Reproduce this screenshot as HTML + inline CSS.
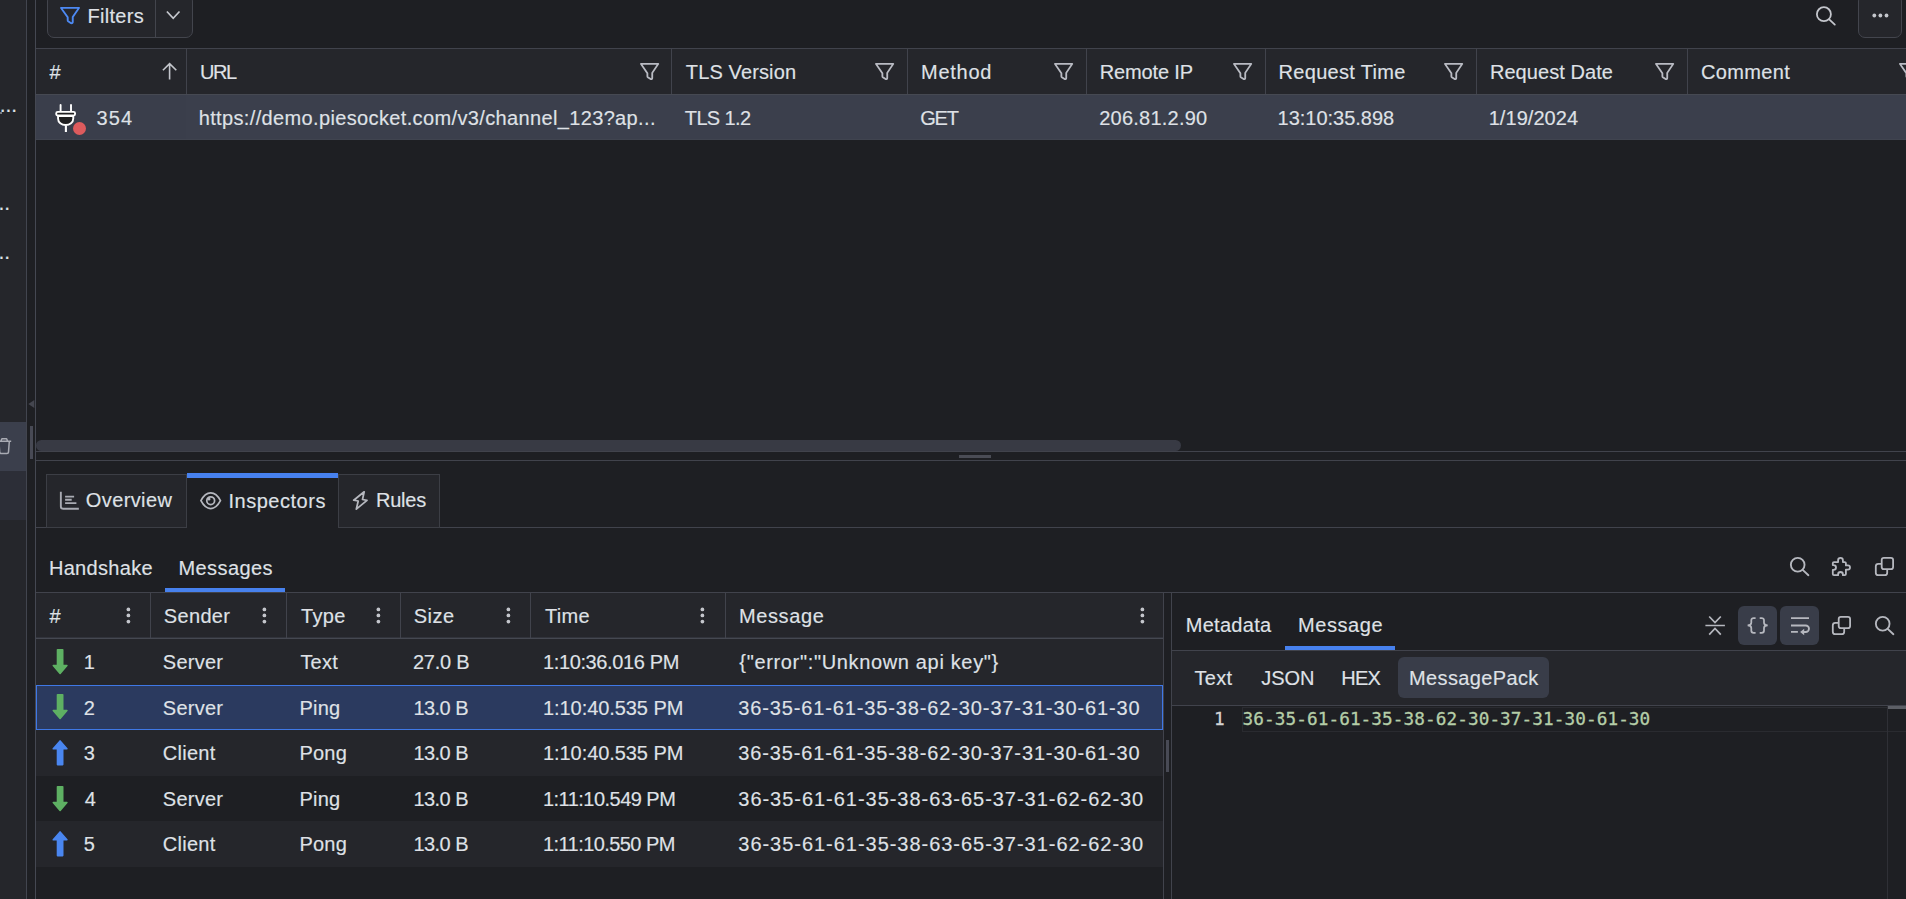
<!DOCTYPE html>
<html lang="en"><head><meta charset="utf-8"><title>Fiddler Everywhere - WebSocket Messages</title>
<style>
html,body{margin:0;padding:0}
body{width:1906px;height:899px;overflow:hidden;background:#1e1f23;position:relative;font-family:"Liberation Sans",sans-serif;color:#dfe1e6}
.a{position:absolute}
.t{position:absolute;white-space:pre;line-height:30px;font-size:20px;color:#dfe1e6}
.t.s{font-family:"Liberation Sans",sans-serif;-webkit-text-stroke-width:0.15px}
.t.m{font-family:"DejaVu Sans Mono","Liberation Mono",monospace;font-size:17.7px;-webkit-text-stroke-width:0.3px}
.ln{position:absolute;background:#41434c}
.pn{position:absolute;background:#25262b}
svg{position:absolute;overflow:visible}

</style></head>
<body>
<!-- left sidebar -->
<div class="pn" style="left:0;top:0;width:26px;height:899px"></div>
<div class="a" style="left:0;top:422px;width:26px;height:49px;background:#3b3f4c"></div>
<div class="a" style="left:0;top:471px;width:26px;height:49px;background:#2c2e37"></div>
<div class="a" style="left:26px;top:0;width:1px;height:899px;background:#42454f"></div>
<div class="a" style="left:35px;top:0;width:1px;height:899px;background:#454852"></div>
<span class="t s" style="left:-0.3px;top:90px;font-size:21px">...</span>
<span class="t s" style="left:-7.4px;top:188px;font-size:21px">...</span>
<span class="t s" style="left:-7.4px;top:237px;font-size:21px">...</span>
<div class="a" style="left:0;top:112px;width:2px;height:2px;background:#9a9ca3;border-radius:1px"></div>
<!-- trash icon -->
<svg style="left:-4px;top:437px" width="16" height="18" viewBox="0 0 16 18" fill="none" stroke="#a9abb3" stroke-width="1.5" stroke-linejoin="round"><path d="M0 4.300h15.200M4.800 4.300L5.900 1.700h4.700l1.100 2.600M13.300 4.500l-0.800 10.600a1.500 1.500 0 0 1-1.500 1.400H5.200a1.500 1.500 0 0 1-1.500-1.400L2.900 4.500"/></svg>
<!-- splitter triangle + grip -->
<svg style="left:28px;top:400px" width="7" height="8" viewBox="0 0 7 8"><path d="M6.300 0v8L0.300 4z" fill="#44464f"/></svg>
<div class="a" style="left:30px;top:426px;width:3px;height:33px;background:#484a55"></div>



<!-- top toolbar -->
<div class="a" style="left:47px;top:-6px;width:144px;height:42px;border:1px solid #43454d;border-radius:7px;background:#25262b"></div>
<div class="a" style="left:155px;top:0;width:1px;height:37px;background:#43454d"></div>
<svg style="left:60px;top:6.700px" width="20" height="17.300" viewBox="0.750 0.750 17.800 16.650" preserveAspectRatio="none" stroke="#4d89f3"><path d="M1.600 1.600H17.700L12.100 10.300V15.200Q12.100 16.700 10.600 16.300L8 14.500Q7.600 14.200 7.600 13.600V10.700Z" fill="none" stroke-width="1.700" stroke-linejoin="round"/></svg>
<svg style="left:166px;top:10px" width="15" height="10" viewBox="0 0 15 10" fill="none" stroke="#c6c8ce" stroke-width="1.700"><path d="M0.900 1.500l6.300 6.800 6.300-6.800"/></svg>
<!-- search -->
<svg style="left:1814.800px;top:4.500px" width="21" height="21" viewBox="0 0 21 21" fill="none" stroke="#c4c6cc" stroke-width="1.800" stroke-linecap="round"><circle cx="8.900" cy="9.200" r="7"/><path d="M14.200 14.400l5.600 5.200"/></svg>
<!-- more button -->
<div class="a" style="left:1858px;top:-6px;width:42px;height:42px;border:1px solid #43454d;border-radius:7px;background:#25262b"></div>
<svg style="left:1872px;top:13px" width="17" height="5" viewBox="0 0 17 5" fill="#c4c6cc"><circle cx="2.300" cy="2.500" r="1.900"/><circle cx="8.400" cy="2.500" r="1.900"/><circle cx="14.500" cy="2.500" r="1.900"/></svg>

<!-- sessions grid header -->
<div class="pn" style="left:36px;top:48px;width:1870px;height:47px"></div>
<div class="ln" style="left:36px;top:48px;width:1870px;height:1px"></div>
<div class="a" style="left:36px;top:94px;width:1870px;height:1px;background:#464952"></div>
<div class="ln" style="left:186px;top:49px;width:1px;height:45px"></div>
<div class="ln" style="left:671px;top:49px;width:1px;height:45px"></div>
<div class="ln" style="left:907px;top:49px;width:1px;height:45px"></div>
<div class="ln" style="left:1086px;top:49px;width:1px;height:45px"></div>
<div class="ln" style="left:1265px;top:49px;width:1px;height:45px"></div>
<div class="ln" style="left:1476px;top:49px;width:1px;height:45px"></div>
<div class="ln" style="left:1687px;top:49px;width:1px;height:45px"></div>
<!-- selected session row -->
<div class="a" style="left:36px;top:95px;width:1870px;height:45px;background:#3b3f4c"></div>
<div class="a" style="left:36px;top:139px;width:1870px;height:1px;background:#40444f"></div>
<div class="a" style="left:36px;top:95px;width:150px;height:44px;background:#3a3e4b"></div>
<!-- sort arrow -->
<svg style="left:162px;top:62px" width="16" height="18" viewBox="0 0 16 18" fill="none" stroke="#c4c6cc" stroke-width="1.600"><path d="M7.600 17.600V1.600M0.900 8.300l6.700-6.700 6.700 6.700"/></svg>
<!-- header filter icons -->
<svg style="left:640px;top:63px" width="19.200" height="17.200" viewBox="0.750 0.750 17.800 16.650" preserveAspectRatio="none" stroke="#b9bbc3"><path d="M1.600 1.600H17.700L12.100 10.300V15.200Q12.100 16.700 10.600 16.300L8 14.500Q7.600 14.200 7.600 13.600V10.700Z" fill="none" stroke-width="1.700" stroke-linejoin="round"/></svg>
<svg style="left:875px;top:63px" width="19.200" height="17.200" viewBox="0.750 0.750 17.800 16.650" preserveAspectRatio="none" stroke="#b9bbc3"><path d="M1.600 1.600H17.700L12.100 10.300V15.200Q12.100 16.700 10.600 16.300L8 14.500Q7.600 14.200 7.600 13.600V10.700Z" fill="none" stroke-width="1.700" stroke-linejoin="round"/></svg>
<svg style="left:1054.200px;top:63px" width="19.200" height="17.200" viewBox="0.750 0.750 17.800 16.650" preserveAspectRatio="none" stroke="#b9bbc3"><path d="M1.600 1.600H17.700L12.100 10.300V15.200Q12.100 16.700 10.600 16.300L8 14.500Q7.600 14.200 7.600 13.600V10.700Z" fill="none" stroke-width="1.700" stroke-linejoin="round"/></svg>
<svg style="left:1233.200px;top:63px" width="19.200" height="17.200" viewBox="0.750 0.750 17.800 16.650" preserveAspectRatio="none" stroke="#b9bbc3"><path d="M1.600 1.600H17.700L12.100 10.300V15.200Q12.100 16.700 10.600 16.300L8 14.500Q7.600 14.200 7.600 13.600V10.700Z" fill="none" stroke-width="1.700" stroke-linejoin="round"/></svg>
<svg style="left:1444.200px;top:63px" width="19.200" height="17.200" viewBox="0.750 0.750 17.800 16.650" preserveAspectRatio="none" stroke="#b9bbc3"><path d="M1.600 1.600H17.700L12.100 10.300V15.200Q12.100 16.700 10.600 16.300L8 14.500Q7.600 14.200 7.600 13.600V10.700Z" fill="none" stroke-width="1.700" stroke-linejoin="round"/></svg>
<svg style="left:1655.200px;top:63px" width="19.200" height="17.200" viewBox="0.750 0.750 17.800 16.650" preserveAspectRatio="none" stroke="#b9bbc3"><path d="M1.600 1.600H17.700L12.100 10.300V15.200Q12.100 16.700 10.600 16.300L8 14.500Q7.600 14.200 7.600 13.600V10.700Z" fill="none" stroke-width="1.700" stroke-linejoin="round"/></svg>
<svg style="left:1898.800px;top:63px" width="19.200" height="17.200" viewBox="0.750 0.750 17.800 16.650" preserveAspectRatio="none" stroke="#b9bbc3"><path d="M1.600 1.600H17.700L12.100 10.300V15.200Q12.100 16.700 10.600 16.300L8 14.500Q7.600 14.200 7.600 13.600V10.700Z" fill="none" stroke-width="1.700" stroke-linejoin="round"/></svg>
<!-- plug icon -->
<svg style="left:55px;top:104px" width="22" height="28" viewBox="0 0 22 28" fill="none" stroke="#fff" stroke-width="1.900"><path d="M5.600 0.900v7M16 0.900v7" stroke-linecap="round"/><path d="M3.050 12v2.500C3.050 18.500 6.500 21 10.650 21S18.250 18.500 18.250 14.500V12z" fill="#202021"/><rect x="1.250" y="7.850" width="18.800" height="3.700" rx="1.500" fill="#202021"/><path d="M10.900 21.500V28" stroke-width="2.100"/></svg>
<div class="a" style="left:72.900px;top:121.800px;width:13.300px;height:13.300px;border-radius:50%;background:#dd5b5d"></div>

<!-- horizontal scrollbar -->
<div class="a" style="left:36px;top:440px;width:1145px;height:11px;border-radius:6px;background:#383a44"></div>
<div class="ln" style="left:36px;top:451px;width:1870px;height:1px"></div>
<div class="a" style="left:959px;top:455px;width:32px;height:3px;background:#4a4c55"></div>
<div class="ln" style="left:36px;top:460px;width:1870px;height:1px"></div>
<!-- main tabs -->
<div class="ln" style="left:36px;top:527px;width:1870px;height:1px"></div>
<div class="a" style="left:46px;top:474px;width:139px;height:52px;border:1px solid #3c3e45;background:#25262b"></div>
<div class="a" style="left:338px;top:474px;width:100px;height:52px;border:1px solid #3c3e45;background:#25262b"></div>
<div class="a" style="left:187px;top:473px;width:151px;height:56px;background:#1e1f23"></div>
<div class="a" style="left:187px;top:473px;width:151px;height:5px;background:#4781ee"></div>
<!-- overview icon -->
<svg style="left:59px;top:491px" width="21" height="19" viewBox="0 0 21 19" fill="none" stroke="#a9abb3" stroke-width="1.900"><path d="M1.850 0.800v14.700a2.300 2.300 0 0 0 2.300 2.300h15.700"/><path d="M6.100 5.550h9M6.100 8.750h6.600M6.100 12.150h11.300" stroke-width="1.800"/></svg>
<!-- eye icon -->
<svg style="left:199.800px;top:491.700px" width="21.400" height="17.500" viewBox="0 0 21.400 17.500" fill="none" stroke="#b6b8bf" stroke-width="1.750"><path d="M0.950 8.700C3.700 3.400 6.700 0.950 10.700 0.950S17.700 3.400 20.450 8.700C17.700 14 14.700 16.550 10.700 16.550S3.700 14 0.950 8.700z"/><circle cx="10.700" cy="8.700" r="3.900"/><circle cx="9" cy="7" r="1.500" fill="#b6b8bf" stroke="none"/></svg>
<!-- bolt icon -->
<svg style="left:352px;top:490px" width="17" height="21" viewBox="0 0 17 21" fill="none" stroke="#b6b8bf" stroke-width="1.750" stroke-linejoin="round"><path d="M12.200 1.800L1.700 10.200l4.500 0.800-1.900 8.200L15 10.300l-4.500-0.800z"/></svg>

<!-- sub tabs -->
<div class="ln" style="left:36px;top:592px;width:1870px;height:1px"></div>
<div class="a" style="left:165px;top:588px;width:120px;height:4px;background:#4781ee"></div>
<svg style="left:1789px;top:556px" width="21" height="21" viewBox="0 0 21 21"><g fill="none" stroke="#b6b8bf" stroke-width="1.850" stroke-linecap="round"><circle cx="8.700" cy="8.700" r="6.850"/><path d="M13.700 13.900l5.700 5.300"/></g></svg>
<svg style="left:1874px;top:556px" width="21" height="21" viewBox="0 0 21 21"><g fill="none" stroke="#b6b8bf" stroke-width="1.800"><rect x="7.700" y="1.800" width="11.400" height="11.400" rx="2.200"/><path d="M7.700 7.800H4.300a2.500 2.500 0 0 0-2.500 2.500v6.400a2.500 2.500 0 0 0 2.500 2.500h6.400a2.500 2.500 0 0 0 2.500-2.500V13.200"/></g></svg>
<!-- puzzle -->
<svg style="left:1831px;top:556px" width="21" height="21" viewBox="0 0 21 21" fill="none" stroke="#b6b8bf" stroke-width="1.800" stroke-linejoin="round"><path d="M3 6.100H7.100V4.200A2.400 2.400 0 0 1 11.900 4.200V6.100H13.700a1.200 1.200 0 0 1 1.200 1.200V9.400H16.900A2.100 2.100 0 0 1 16.900 13.600H14.900V18a1.200 1.200 0 0 1-1.200 1.200H11.900V18.400A2.400 2.400 0 0 0 7.100 18.400V19.200H3a1.200 1.200 0 0 1-1.200-1.200V13.900H2.600A2.400 2.400 0 0 0 2.600 9.100H1.800V7.300a1.200 1.200 0 0 1 1.200-1.200Z"/></svg>

<!-- messages grid -->
<div class="pn" style="left:36px;top:593px;width:1127px;height:45px"></div>
<div class="a" style="left:36px;top:637px;width:1127px;height:1px;background:#31333b"></div>
<div class="a" style="left:36px;top:638px;width:1127px;height:1px;background:#454851"></div>
<div class="ln" style="left:150px;top:593px;width:1px;height:45px"></div>
<div class="ln" style="left:286px;top:593px;width:1px;height:45px"></div>
<div class="ln" style="left:400px;top:593px;width:1px;height:45px"></div>
<div class="ln" style="left:530px;top:593px;width:1px;height:45px"></div>
<div class="ln" style="left:725px;top:593px;width:1px;height:45px"></div>
<svg style="left:125.700px;top:607.200px" width="5" height="17" viewBox="0 0 5 17" fill="#c4c6cc"><g><circle cx="2.400" cy="2.400" r="1.850"/><circle cx="2.400" cy="8.450" r="1.850"/><circle cx="2.400" cy="14.600" r="1.850"/></g></svg>
<svg style="left:261.600px;top:607.200px" width="5" height="17" viewBox="0 0 5 17" fill="#c4c6cc"><g><circle cx="2.400" cy="2.400" r="1.850"/><circle cx="2.400" cy="8.450" r="1.850"/><circle cx="2.400" cy="14.600" r="1.850"/></g></svg>
<svg style="left:375.500px;top:607.200px" width="5" height="17" viewBox="0 0 5 17" fill="#c4c6cc"><g><circle cx="2.400" cy="2.400" r="1.850"/><circle cx="2.400" cy="8.450" r="1.850"/><circle cx="2.400" cy="14.600" r="1.850"/></g></svg>
<svg style="left:505.600px;top:607.200px" width="5" height="17" viewBox="0 0 5 17" fill="#c4c6cc"><g><circle cx="2.400" cy="2.400" r="1.850"/><circle cx="2.400" cy="8.450" r="1.850"/><circle cx="2.400" cy="14.600" r="1.850"/></g></svg>
<svg style="left:700.400px;top:607.200px" width="5" height="17" viewBox="0 0 5 17" fill="#c4c6cc"><g><circle cx="2.400" cy="2.400" r="1.850"/><circle cx="2.400" cy="8.450" r="1.850"/><circle cx="2.400" cy="14.600" r="1.850"/></g></svg>
<svg style="left:1139.500px;top:607.200px" width="5" height="17" viewBox="0 0 5 17" fill="#c4c6cc"><g><circle cx="2.400" cy="2.400" r="1.850"/><circle cx="2.400" cy="8.450" r="1.850"/><circle cx="2.400" cy="14.600" r="1.850"/></g></svg>
<div class="pn" style="left:36px;top:639px;width:1127px;height:46px"></div>
<div class="a" style="left:36px;top:685px;width:1125px;height:43px;border:1px solid #3f78e6;background:#2b3a5f"></div>
<div class="pn" style="left:36px;top:730px;width:1127px;height:46px"></div>
<div class="pn" style="left:36px;top:821px;width:1127px;height:46px"></div>
<svg style="left:51.500px;top:649px" width="17" height="26" viewBox="0 0 17 26" fill="#5eb063" stroke="#5eb063"><path d="M5.500 0.800h5.200v15.800h4.200L8.100 24.500 1.300 16.600h4.200z" stroke-width="1.600" stroke-linejoin="round"/></svg>
<svg style="left:51.500px;top:694px" width="17" height="26" viewBox="0 0 17 26" fill="#5eb063" stroke="#5eb063"><path d="M5.500 0.800h5.200v15.800h4.200L8.100 24.500 1.300 16.600h4.200z" stroke-width="1.600" stroke-linejoin="round"/></svg>
<svg style="left:51.500px;top:739.700px" width="17" height="26" viewBox="0 0 17 26" fill="#4a86f0" stroke="#4a86f0"><path d="M5.500 24.600h5.200V8.800h4.200L8.100 0.900 1.300 8.800h4.200z" stroke-width="1.600" stroke-linejoin="round"/></svg>
<svg style="left:51.500px;top:785.500px" width="17" height="26" viewBox="0 0 17 26" fill="#5eb063" stroke="#5eb063"><path d="M5.500 0.800h5.200v15.800h4.200L8.100 24.500 1.300 16.600h4.200z" stroke-width="1.600" stroke-linejoin="round"/></svg>
<svg style="left:51.500px;top:830.500px" width="17" height="26" viewBox="0 0 17 26" fill="#4a86f0" stroke="#4a86f0"><path d="M5.500 24.600h5.200V8.800h4.200L8.100 0.900 1.300 8.800h4.200z" stroke-width="1.600" stroke-linejoin="round"/></svg>

<!-- vertical splitter -->
<div class="ln" style="left:1163px;top:593px;width:1px;height:306px"></div>
<div class="ln" style="left:1171px;top:593px;width:1px;height:306px"></div>
<div class="a" style="left:1166px;top:740px;width:3px;height:32px;background:#484a55"></div>

<!-- right panel -->
<div class="a" style="left:1285px;top:646px;width:110px;height:4px;background:#4781ee"></div>
<div class="ln" style="left:1172px;top:650px;width:734px;height:1px"></div>
<div class="pn" style="left:1172px;top:651px;width:734px;height:54px"></div>
<div class="ln" style="left:1172px;top:705px;width:734px;height:1px"></div>
<div class="a" style="left:1398px;top:657px;width:151px;height:41px;border-radius:6px;background:#393d49"></div>
<div class="a" style="left:1738px;top:606px;width:39px;height:39px;border-radius:6px;background:#393d49"></div>
<div class="a" style="left:1780px;top:606px;width:39px;height:39px;border-radius:6px;background:#393d49"></div>
<!-- collapse icon -->
<svg style="left:1705px;top:615px" width="20" height="21" viewBox="0 0 20 21" fill="none" stroke="#b6b8bf" stroke-width="1.700"><path d="M0.400 10.500h19.500M4.200 1.500l5.800 6.100 5.800-6.100M4.200 19.700l5.800-6.300 5.800 6.300"/></svg>
<!-- braces -->
<svg style="left:1746px;top:616px" width="23" height="19" viewBox="0 0 23 19" fill="none" stroke="#b6b8bf" stroke-width="1.750"><path d="M9.6 2H7.6A2.3 2.3 0 0 0 5.3 4.3V6.8Q5.3 9.4 1.6 9.4Q5.3 9.4 5.3 12V14.5A2.3 2.3 0 0 0 7.6 16.8H9.6M13.7 2H15.7A2.3 2.3 0 0 1 18 4.3V6.8Q18 9.4 21.7 9.4Q18 9.4 18 12V14.5A2.3 2.3 0 0 1 15.7 16.800H13.7"/></svg>
<!-- wrap -->
<svg style="left:1790px;top:616px" width="21" height="20" viewBox="0 0 21 20" fill="none" stroke="#b6b8bf" stroke-width="1.850"><path d="M1 2.050h18M1 9.450h14.700a3.280 3.280 0 0 1 0 6.560H13M1 15.850h6.900"/><path d="M14.200 12.800L10.100 16l4.100 3.200z" fill="#b6b8bf" stroke="none"/></svg>
<svg style="left:1831.300px;top:615px" width="21" height="21" viewBox="0 0 21 21"><g fill="none" stroke="#b6b8bf" stroke-width="1.800"><rect x="7.700" y="1.800" width="11.400" height="11.400" rx="2.200"/><path d="M7.700 7.800H4.300a2.500 2.500 0 0 0-2.500 2.500v6.400a2.500 2.500 0 0 0 2.500 2.500h6.400a2.500 2.500 0 0 0 2.500-2.500V13.200"/></g></svg>
<svg style="left:1874.200px;top:615.300px" width="21" height="21" viewBox="0 0 21 21"><g fill="none" stroke="#b6b8bf" stroke-width="1.850" stroke-linecap="round"><circle cx="8.700" cy="8.700" r="6.850"/><path d="M13.700 13.900l5.700 5.300"/></g></svg>
<!-- editor -->
<div class="a" style="left:1242px;top:707px;width:680px;height:23px;border:1px solid #2a2b30"></div>
<div class="a" style="left:1887px;top:706px;width:1px;height:193px;background:#2f3036"></div>
<div class="a" style="left:1888px;top:706px;width:18px;height:3px;background:#5d5f66"></div>

<div id="texts">
<span class="t s" style="left:87.4px;top:1.0px;letter-spacing:0.317px;">Filters</span>
<span class="t s" style="left:49.6px;top:57.0px;">#</span>
<span class="t s" style="left:199.9px;top:57.0px;letter-spacing:-1.35px;">URL</span>
<span class="t s" style="left:685.8px;top:57.0px;letter-spacing:0.13px;">TLS Version</span>
<span class="t s" style="left:921.0px;top:57.0px;letter-spacing:0.74px;">Method</span>
<span class="t s" style="left:1099.8px;top:57.0px;letter-spacing:-0.15px;">Remote IP</span>
<span class="t s" style="left:1278.6px;top:57.0px;letter-spacing:0.3px;">Request Time</span>
<span class="t s" style="left:1489.9px;top:57.0px;letter-spacing:0.064px;">Request Date</span>
<span class="t s" style="left:1701.0px;top:57.0px;letter-spacing:0.367px;">Comment</span>
<span class="t s" style="left:96.6px;top:103.0px;letter-spacing:1.05px;">354</span>
<span class="t s" style="left:198.7px;top:103.0px;letter-spacing:0.359px;">https://demo.piesocket.com/v3/channel_123?ap...</span>
<span class="t s" style="left:684.8px;top:103.0px;letter-spacing:-0.633px;">TLS 1.2</span>
<span class="t s" style="left:920.2px;top:103.0px;letter-spacing:-1.2px;">GET</span>
<span class="t s" style="left:1099.2px;top:103.0px;letter-spacing:0.24px;">206.81.2.90</span>
<span class="t s" style="left:1277.6px;top:103.0px;letter-spacing:-0.018px;">13:10:35.898</span>
<span class="t s" style="left:1488.7px;top:103.0px;letter-spacing:0.05px;">1/19/2024</span>
<span class="t s" style="left:85.8px;top:485.2px;letter-spacing:0.386px;">Overview</span>
<span class="t s" style="left:228.4px;top:485.7px;letter-spacing:0.533px;">Inspectors</span>
<span class="t s" style="left:376.0px;top:485.2px;letter-spacing:-0.225px;">Rules</span>
<span class="t s" style="left:48.9px;top:553.2px;letter-spacing:0.312px;">Handshake</span>
<span class="t s" style="left:178.5px;top:553.2px;letter-spacing:0.414px;">Messages</span>
<span class="t s" style="left:49.4px;top:601.2px;">#</span>
<span class="t s" style="left:163.8px;top:601.2px;letter-spacing:0.34px;">Sender</span>
<span class="t s" style="left:301.0px;top:601.2px;letter-spacing:0.367px;">Type</span>
<span class="t s" style="left:413.8px;top:601.2px;letter-spacing:0.433px;">Size</span>
<span class="t s" style="left:544.9px;top:601.2px;letter-spacing:0.367px;">Time</span>
<span class="t s" style="left:739.0px;top:601.2px;letter-spacing:0.6px;">Message</span>
<span class="t s" style="left:83.8px;top:647.2px;">1</span>
<span class="t s" style="left:162.8px;top:647.2px;letter-spacing:0.26px;">Server</span>
<span class="t s" style="left:300.4px;top:647.2px;letter-spacing:0.233px;">Text</span>
<span class="t s" style="left:413.0px;top:647.2px;letter-spacing:-0.26px;">27.0 B</span>
<span class="t s" style="left:543.0px;top:647.2px;letter-spacing:-0.377px;">1:10:36.016 PM</span>
<span class="t s" style="left:739.3px;top:647.2px;letter-spacing:0.658px;">{"error":"Unknown api key"}</span>
<span class="t s" style="left:83.8px;top:692.8px;">2</span>
<span class="t s" style="left:162.8px;top:692.8px;letter-spacing:0.26px;">Server</span>
<span class="t s" style="left:299.4px;top:692.8px;letter-spacing:0.233px;">Ping</span>
<span class="t s" style="left:413.4px;top:692.8px;letter-spacing:-0.54px;">13.0 B</span>
<span class="t s" style="left:543.0px;top:692.8px;letter-spacing:-0.069px;">1:10:40.535 PM</span>
<span class="t s" style="left:738.3px;top:692.8px;letter-spacing:0.868px;">36-35-61-61-35-38-62-30-37-31-30-61-30</span>
<span class="t s" style="left:83.8px;top:738.2px;">3</span>
<span class="t s" style="left:162.8px;top:738.2px;letter-spacing:0.26px;">Client</span>
<span class="t s" style="left:299.4px;top:738.2px;letter-spacing:0.233px;">Pong</span>
<span class="t s" style="left:413.4px;top:738.2px;letter-spacing:-0.54px;">13.0 B</span>
<span class="t s" style="left:543.0px;top:738.2px;letter-spacing:-0.069px;">1:10:40.535 PM</span>
<span class="t s" style="left:738.3px;top:738.2px;letter-spacing:0.868px;">36-35-61-61-35-38-62-30-37-31-30-61-30</span>
<span class="t s" style="left:84.8px;top:783.8px;">4</span>
<span class="t s" style="left:162.8px;top:783.8px;letter-spacing:0.26px;">Server</span>
<span class="t s" style="left:299.4px;top:783.8px;letter-spacing:0.233px;">Ping</span>
<span class="t s" style="left:413.4px;top:783.8px;letter-spacing:-0.54px;">13.0 B</span>
<span class="t s" style="left:543.0px;top:783.8px;letter-spacing:-0.531px;">1:11:10.549 PM</span>
<span class="t s" style="left:738.3px;top:783.8px;letter-spacing:0.968px;">36-35-61-61-35-38-63-65-37-31-62-62-30</span>
<span class="t s" style="left:83.8px;top:829.2px;">5</span>
<span class="t s" style="left:162.8px;top:829.2px;letter-spacing:0.26px;">Client</span>
<span class="t s" style="left:299.4px;top:829.2px;letter-spacing:0.233px;">Pong</span>
<span class="t s" style="left:413.4px;top:829.2px;letter-spacing:-0.54px;">13.0 B</span>
<span class="t s" style="left:543.0px;top:829.2px;letter-spacing:-0.569px;">1:11:10.550 PM</span>
<span class="t s" style="left:738.3px;top:829.2px;letter-spacing:0.968px;">36-35-61-61-35-38-63-65-37-31-62-62-30</span>
<span class="t s" style="left:1185.7px;top:609.7px;letter-spacing:0.3px;">Metadata</span>
<span class="t s" style="left:1298.0px;top:609.7px;letter-spacing:0.583px;">Message</span>
<span class="t s" style="left:1194.4px;top:662.6px;letter-spacing:0.333px;">Text</span>
<span class="t s" style="left:1261.2px;top:662.6px;">JSON</span>
<span class="t s" style="left:1341.2px;top:662.6px;letter-spacing:-0.7px;">HEX</span>
<span class="t s" style="left:1409.0px;top:662.6px;letter-spacing:0.37px;">MessagePack</span>
<span class="t m" style="left:1214.1px;top:704.0px;color:#d4d4d4;">1</span>
<span class="t m" style="left:1242.6px;top:704.0px;letter-spacing:0.081px;color:#b5cea8;">36-35-61-61-35-38-62-30-37-31-30-61-30</span>
</div>
</body></html>
